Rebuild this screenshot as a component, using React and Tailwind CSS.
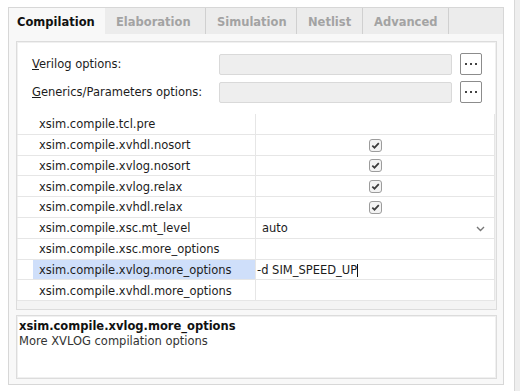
import React from 'react';

const tabs = [
  { label: 'Compilation', w: 'w-[96px]', active: true },
  { label: 'Elaboration', w: 'w-[101px]' },
  { label: 'Simulation', w: 'w-[91px]' },
  { label: 'Netlist', w: 'w-[66px]' },
  { label: 'Advanced', w: 'w-[86px]' },
];

const rows = [
  { name: 'xsim.compile.tcl.pre', type: 'text', value: '' },
  { name: 'xsim.compile.xvhdl.nosort', type: 'check' },
  { name: 'xsim.compile.xvlog.nosort', type: 'check' },
  { name: 'xsim.compile.xvlog.relax', type: 'check' },
  { name: 'xsim.compile.xvhdl.relax', type: 'check' },
  { name: 'xsim.compile.xsc.mt_level', type: 'select', value: 'auto' },
  { name: 'xsim.compile.xsc.more_options', type: 'text', value: '' },
  { name: 'xsim.compile.xvlog.more_options', type: 'edit', value: '-d SIM_SPEED_UP', selected: true },
  { name: 'xsim.compile.xvhdl.more_options', type: 'text', value: '' },
];

function Checkbox() {
  return (
    <svg width="13" height="13" viewBox="0 0 13 13">
      <rect x="0.5" y="0.5" width="12" height="12" rx="2.5" fill="#f3f3f3" stroke="#9c9c9c" />
      <path d="M3.3 6.6 L5.5 8.7 L9.8 4.1" fill="none" stroke="#3c3c3c" strokeWidth="1.7" />
    </svg>
  );
}

function DotsButton() {
  return (
    <button className="w-[22px] h-[22px] ml-[8px] shrink-0 border border-[#8c8c8c] rounded-[2px] bg-white flex items-center justify-center gap-[3px]">
      <span className="w-[2px] h-[2px] bg-[#444]" />
      <span className="w-[2px] h-[2px] bg-[#444]" />
      <span className="w-[2px] h-[2px] bg-[#444]" />
    </button>
  );
}

function OptionRow({ mnemonic, rest }) {
  return (
    <div className="flex items-center h-[22px] shrink-0">
      <div className="w-[187px] shrink-0 pt-[2px]">
        <span className="underline">{mnemonic}</span>
        {rest}
      </div>
      <div className="w-[233px] h-[21px] shrink-0 bg-[#eeeeee] border border-[#d9d9d9] rounded-[2px]" />
      <DotsButton />
    </div>
  );
}

export default function App() {
  return (
    <div className="w-[520px] h-[391px] bg-white flex overflow-hidden font-['DejaVu_Sans',sans-serif] text-[11.5px] text-[#1c1c1c]">
      <div className="pl-[8px] pt-[7px] w-[506px] shrink-0">
        <div className="w-[496px] h-[378px] border border-[#d7d7d7] bg-[#f8f8f8] flex flex-col">
          {/* Tabs */}
          <div className="h-[26px] shrink-0 flex bg-[#ececec]">
            {tabs.map((t) => (
              <div
                key={t.label}
                className={`${t.w} h-full flex items-center pt-[3px] font-bold ${
                  t.active ? 'bg-[#f8f8f8] text-[#111] pl-[8px]' : 'text-[#a3a3a3] pl-[11px] border-r border-[#d0d0d0]'
                }`}
              >
                {t.label}
              </div>
            ))}
          </div>

          {/* Body */}
          <div className="h-[350px] shrink-0 flex flex-col pl-[7px] pt-[7px] pr-[6px] pb-[5px]">
            <div className="h-[269px] shrink-0 border border-[#dcdcdc] shadow-[inset_0_0_0_1px_#f0f0f0] bg-white flex flex-col">
              <div className="shrink-0 pl-[15px] pt-[11px] pb-[11px] flex flex-col gap-[6px]">
                <OptionRow mnemonic="V" rest="erilog options:" />
                <OptionRow mnemonic="G" rest="enerics/Parameters options:" />
              </div>

              <div className="shrink-0 flex flex-col pr-[1px]">
                {rows.map((r) => (
                  <div key={r.name} className="flex h-[20.8px] shrink-0 border-b border-[#e6e6e6]">
                    <div className="w-[16px] shrink-0" />
                    <div
                      className={`w-[223px] shrink-0 flex items-center pl-[6px] pt-[2px] border-r border-[#e6e6e6] ${
                        r.selected ? 'bg-[#cfdffa]' : ''
                      }`}
                    >
                      {r.name}
                    </div>
                    <div className="flex-1 flex items-center border-r border-[#e6e6e6]">
                      {r.type === 'check' && (
                        <div className="flex-1 flex justify-center pt-[1px]">
                          <Checkbox />
                        </div>
                      )}
                      {r.type === 'select' && (
                        <div className="flex-1 flex items-center justify-between pl-[6px] pr-[9px] pt-[2px]">
                          <span>{r.value}</span>
                          <svg width="9" height="6" viewBox="0 0 9 6">
                            <path d="M1 1 L4.5 4.5 L8 1" fill="none" stroke="#777" strokeWidth="1.4" />
                          </svg>
                        </div>
                      )}
                      {r.type === 'edit' && (
                        <div className="flex-1 h-full flex items-center bg-white pl-[1px] pt-[2px]">
                          <span>{r.value}</span>
                          <span className="w-px h-[13px] bg-[#111]" />
                        </div>
                      )}
                    </div>
                  </div>
                ))}
              </div>
              <div className="flex-1 bg-[#f4f4f4]" />
            </div>

            {/* Description */}
            <div className="mt-[5px] h-[64px] shrink-0 border border-[#dcdcdc] shadow-[inset_0_0_0_1px_#f0f0f0] bg-white px-[2px] pt-[3px] leading-[15px]">
              <div className="font-bold text-[#111]">xsim.compile.xvlog.more_options</div>
              <div className="text-[#333]">More XVLOG compilation options</div>
            </div>
          </div>
        </div>
      </div>
      <div className="ml-[8px] w-px shrink-0 bg-[#d8d8d8]" />
      <div className="flex-1 bg-[#eeeeee]" />
    </div>
  );
}
